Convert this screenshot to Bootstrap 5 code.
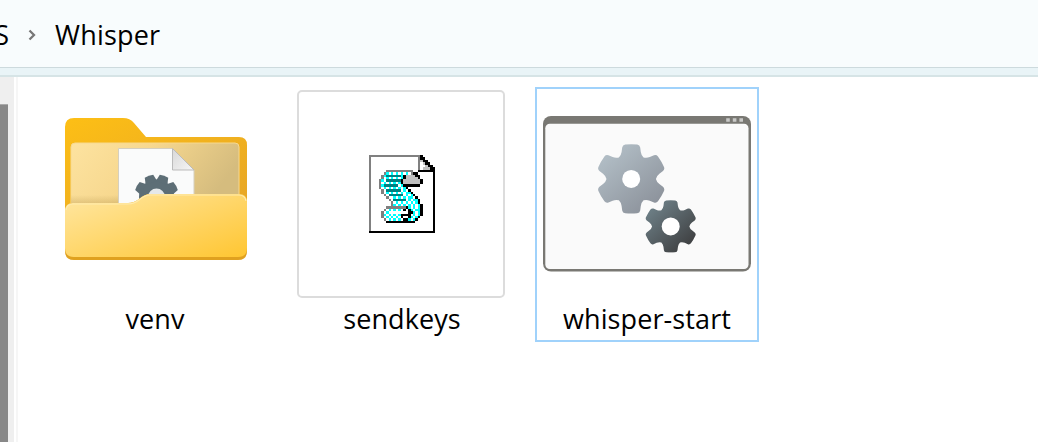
<!DOCTYPE html>
<html lang="en">
<head>
<meta charset="utf-8">
<title>Whisper</title>
<link href="https://cdn.jsdelivr.net/npm/bootstrap@5.3.0/dist/css/bootstrap.min.css" rel="stylesheet">
<style>
body{font-family:"Open Sans","Noto Sans",sans-serif;font-size:27px;line-height:36px;color:#000;background:#fff;height:442px}
.address{height:68px;background:#f8fcfd;border-bottom:1px solid #cddadd;padding-top:2px}
.crumb-cut{width:9px;direction:rtl;white-space:nowrap}
.chev{margin:0 19px 0 19px}
.crumb-name{letter-spacing:.2px}
.strip{height:9px;background:#e9f4f7;border-bottom:2px solid #d6e4e6}
.scroller{width:14px;background:#efefef;padding-top:27px}
.thumb{width:8px;background:#888;border-top:1px solid #aaa}
.divider{width:2px;margin-left:2px;background:#f6f6f6}
.files{padding:10px 0 0 25px;gap:22px}
.tile{width:224px;height:255px;border:2px solid transparent}
.tile.active{border-color:#a0d2fb}
.thumbnail{width:208px;height:208px;margin-top:1px}
.framed{border:2px solid #dcdcdc;border-radius:5px;padding-left:2px}
.label{margin-top:3px;white-space:nowrap;letter-spacing:.1px}
.label-nudge{padding-left:2px}
</style>
</head>
<body class="d-flex flex-column overflow-hidden">
<header class="address d-flex align-items-center flex-shrink-0">
  <span class="crumb-cut overflow-hidden">S</span>
  <svg class="chev" width="8" height="12" viewBox="0 0 8 12"><path d="M1.500 1.500 6 6l-4.500 4.500" fill="none" stroke="#777" stroke-width="2.300"/></svg>
  <span class="crumb-name">Whisper</span>
</header>
<div class="strip flex-shrink-0"></div>
<main class="d-flex flex-grow-1">
  <div class="scroller d-flex"><div class="thumb"></div></div>
  <div class="divider"></div>
  <section class="files d-flex align-items-start">
    <div class="tile d-flex flex-column align-items-center">
      <svg class="thumbnail" viewBox="51 90 208 208">
        <defs>
          <linearGradient id="back" x1="0" y1="0" x2="1" y2="1"><stop stop-color="#fdbf15"/><stop offset="1" stop-color="#e6a527"/></linearGradient>
          <linearGradient id="inner" x1="0" y1="0" x2="1" y2=".3"><stop stop-color="#fde3a0"/><stop offset=".45" stop-color="#f7d88f"/><stop offset="1" stop-color="#d5bc7e"/></linearGradient>
          <linearGradient id="front" x1="0" y1="0" x2="1" y2="1"><stop stop-color="#ffe7a3"/><stop offset="1" stop-color="#ffc632"/></linearGradient>
          <linearGradient id="fold" x1="0" y1="0" x2="1" y2="1"><stop stop-color="#d8d8d8"/><stop offset="1" stop-color="#f6f6f6"/></linearGradient>
          <linearGradient id="shade" gradientUnits="userSpaceOnUse" x1="0" y1="195" x2="0" y2="205"><stop stop-color="#8a6a20" stop-opacity="0"/><stop offset="1" stop-color="#8a6a20" stop-opacity=".25"/></linearGradient>
        </defs>
        <path d="M65 127q0-9 9-9h49q7 0 11 5l12 14h93q8 0 8 8v65H65z" fill="url(#back)"/>
        <path d="M71 147q0-4 4-4h160q4 0 4 4v60H71z" fill="url(#inner)" stroke="#f7d98e"/>
        <path d="M71 195h48v10H71z" fill="url(#shade)"/>
        <path d="M118.500 148.500h54l21.500 21.500v35h-75.500z" fill="#fafbfb" stroke="#d5cfbf"/>
        <path d="M172.500 148.500v21.500h21.500z" fill="url(#fold)" stroke="#bbb"/>
        <g transform="translate(156.500 197)" fill="#5d6e76">
          <circle r="17.500"/>
          <path id="cog" d="M-4.500-22q4.500-1 9 0L6-15H-6z" transform="rotate(20)"/><use href="#cog" transform="rotate(-40)"/><use href="#cog" transform="rotate(40)"/><use href="#cog" transform="rotate(-80)"/>
          <circle r="8.500" fill="#e5e8e9"/>
        </g>
        <path d="M65 211q0-8 8-8h55q6 0 11-4 6-5 11-5h89q8 0 8 8v49q0 9-9 9H74q-9 0-9-9z" fill="#e0a11f"/>
        <path d="M65 211q0-8 8-8h55q6 0 11-4 6-5 11-5h89q8 0 8 8v46q0 9-9 9H74q-9 0-9-9z" fill="url(#front)"/>
        <path d="M66 210q1-6 7-6h55q6 0 11-4 6-5 11-5h89q6 0 7 6" fill="none" stroke="#ffebae" stroke-width="1.200"/>
      </svg>
      <div class="label">venv</div>
    </div>
    <div class="tile d-flex flex-column align-items-center">
      <div class="thumbnail framed d-flex align-items-center justify-content-center">
        <svg id="script-icon" width="66" height="78" viewBox="0 0 27 32" preserveAspectRatio="none" shape-rendering="crispEdges">
          <path d="M0 0h21v1h1v1h1v1h1v1h1v1h1v1h1v26H0z" fill="#fff"/>
          <path d="M0 0h21v1H1v30H0z" fill="#808080"/>
          <path d="M21 1h1v1h1v1h1v1h1v1h1v1h-5z" fill="#c0c0c0"/>
          <path d="M20 1h1v5h-1z" fill="#808080"/>
          <path d="M21 0h1v1h1v1h1v1h1v1h1v1h1v1h1v26H0v-1h26V7h-6V6h5V5h-1V4h-1V3h-1V2h-1z" fill="#000"/>
          <path d="M21 3h1v1h1v1h-1v1h-1z" fill="#fff"/>
        </svg>
      </div>
      <div class="label label-nudge">sendkeys</div>
    </div>
    <div class="tile active d-flex flex-column align-items-center">
      <svg class="thumbnail" viewBox="543 90 208 208">
        <defs>
          <linearGradient id="light" gradientUnits="userSpaceOnUse" x1="-24" y1="-28" x2="24" y2="28"><stop stop-color="#b2bec6"/><stop offset="1" stop-color="#8c929b"/></linearGradient>
          <linearGradient id="dark" gradientUnits="userSpaceOnUse" x1="-22" y1="-24" x2="22" y2="24"><stop stop-color="#6b7c83"/><stop offset="1" stop-color="#414345"/></linearGradient>
          <path id="tooth" d="M-15-19.500Q-10.300-22-9.600-27L-9-31.500Q-8.600-34-6-34.400 0-35 6-34.400 8.600-34 9-31.500L9.600-27Q10.300-22 15-19.500L0 0z"/>
          <clipPath id="gear"><circle r="24.600"/><use href="#tooth"/><use href="#tooth" transform="rotate(60)"/><use href="#tooth" transform="rotate(120)"/><use href="#tooth" transform="rotate(180)"/><use href="#tooth" transform="rotate(240)"/><use href="#tooth" transform="rotate(300)"/></clipPath>
        </defs>
        <rect x="543" y="116" width="208" height="155.500" rx="8" fill="#797873"/>
        <rect x="545.300" y="123.800" width="203.200" height="145.200" rx="4.500" fill="#fafafa"/>
        <path d="M726.200 118.200h3.600v3.600h-3.600zm6.600 0h3.600v3.600h-3.600zm6.600 0h3.600v3.600h-3.600z" fill="#c9c9c7"/>
        <g transform="translate(631.200 178.900)"><rect x="-36" y="-36" width="72" height="72" fill="url(#light)" clip-path="url(#gear)"/><circle r="9" fill="#fff"/></g>
        <g transform="translate(670.700 226.400)"><g transform="scale(.755)"><rect x="-36" y="-36" width="72" height="72" fill="url(#dark)" clip-path="url(#gear)"/></g><circle r="9" fill="#fff"/></g>
      </svg>
      <div class="label">whisper-start</div>
    </div>
  </section>
</main>
<script src="https://cdn.jsdelivr.net/npm/bootstrap@5.3.0/dist/js/bootstrap.bundle.min.js"></script>
<script>
// Paper scroll, one character per icon pixel, starting at column 4, row 6.
const scroll = [
"...GGGGGGGGGGG....",
"..GCWCWCWCWCWGKK..",
".GCTTTTTTCKSSSSKK.",
".GWCWCWCWCKSSSSSK.",
"GCWTTTTTTKSSSSSSSK",
"GWCWCWCWCKSSSSSSSK",
"GCTTTTTTWCKKKKKKK.",
"GWCWCWCWCWCK......",
".GWTTTTTTWCWK.....",
".GWCWCWCWCWCCK....",
"..GWTTTTTTWCWCK...",
"...GWWCWCWCWCCWK..",
"....GWTTTTTWCWCCK.",
".....GWCWCWCWCWCK.",
".....GCWCWCWCWCWCK",
"...GGGGGGGGKCWCWCK",
"..GWCWCWCWKWKCWCCK",
".GWCWWWWWWWWKKCWCK",
".GCWCWCWCKKKKWCWCK",
".GWCWCWCWKWWKCWCK.",
"..GWCWCWCWKKCWCK..",
"...KKKKKKKKKKKK..."];
const ink = {G:"#808080",K:"#000",C:"#00ffff",T:"#008080",S:"#c0c0c0",W:"#fff"};
const icon = document.getElementById("script-icon");
scroll.forEach((row, y) => [...row].forEach((c, x) => {
  if (!ink[c]) return;
  const r = document.createElementNS("http://www.w3.org/2000/svg", "rect");
  Object.entries({x: x + 4, y: y + 6, width: 1, height: 1, fill: ink[c]}).forEach(([k, v]) => r.setAttribute(k, v));
  icon.append(r);
}));
</script>
</body>
</html>
